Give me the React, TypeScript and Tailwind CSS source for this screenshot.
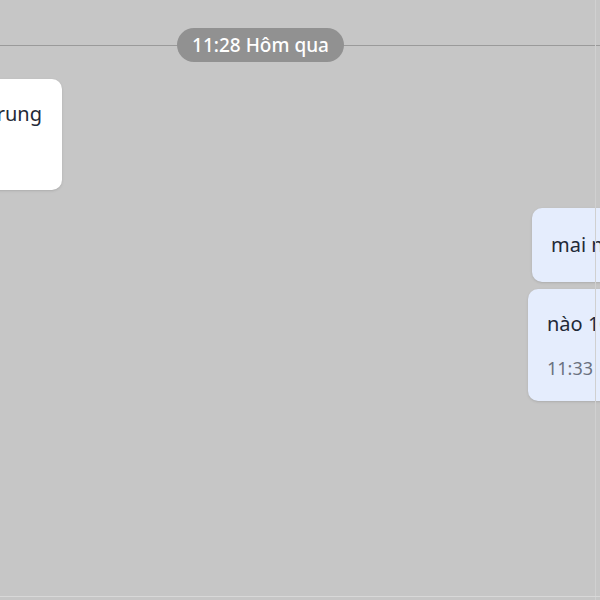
export default function App() {
  return (
    <div
      className="relative w-[600px] h-[600px] overflow-hidden bg-[#c6c6c6] flex flex-col"
      style={{ fontFamily: '"Noto Sans", "Open Sans", sans-serif' }}
    >
      {/* day divider */}
      <div className="relative mt-[28px] h-[34px] flex items-center">
        <div className="absolute left-0 right-0 top-[17px] h-px bg-[#9a9a9a]" />
        <div className="relative ml-[177px] w-[167px] h-[34px] rounded-full bg-[#919191] flex items-center justify-center text-white text-[19px] font-medium">
          11:28 Hôm qua
        </div>
      </div>

      {/* incoming message */}
      <div className="mt-[17px] -ml-[238px] w-[300px] h-[111px] rounded-[10px] bg-white shadow-sm flex flex-col items-end pr-[20px] pt-[20px] text-[20px] text-[#1f2937]">
        <p className="whitespace-nowrap leading-[30px]">Dạ em sẽ báo lại cho anh Trung</p>
      </div>

      {/* outgoing messages */}
      <div className="mt-[18px] ml-[532px] w-[200px] h-[74px] rounded-[10px] bg-[#e5edfd] shadow-sm flex items-center pl-[19px] text-[20px] text-[#1f2937]">
        <p className="whitespace-nowrap">mai nhé anh</p>
      </div>
      <div className="mt-[7px] ml-[528px] w-[200px] h-[112px] rounded-[10px] bg-[#e5edfd] shadow-sm flex flex-col pl-[19px] pt-[20px] text-[#1f2937]">
        <p className="whitespace-nowrap text-[20px] leading-[30px]">nào 10h nhé</p>
        <p className="mt-[16px] whitespace-nowrap text-[18px] text-[#6b7280]">11:33</p>
      </div>

      {/* frame edges */}
      <div className="absolute top-0 bottom-0 right-[4px] w-px bg-[#d0d0d0]" />
      <div className="absolute left-0 right-0 bottom-[3px] h-px bg-[#d8d8d8]" />
    </div>
  );
}
